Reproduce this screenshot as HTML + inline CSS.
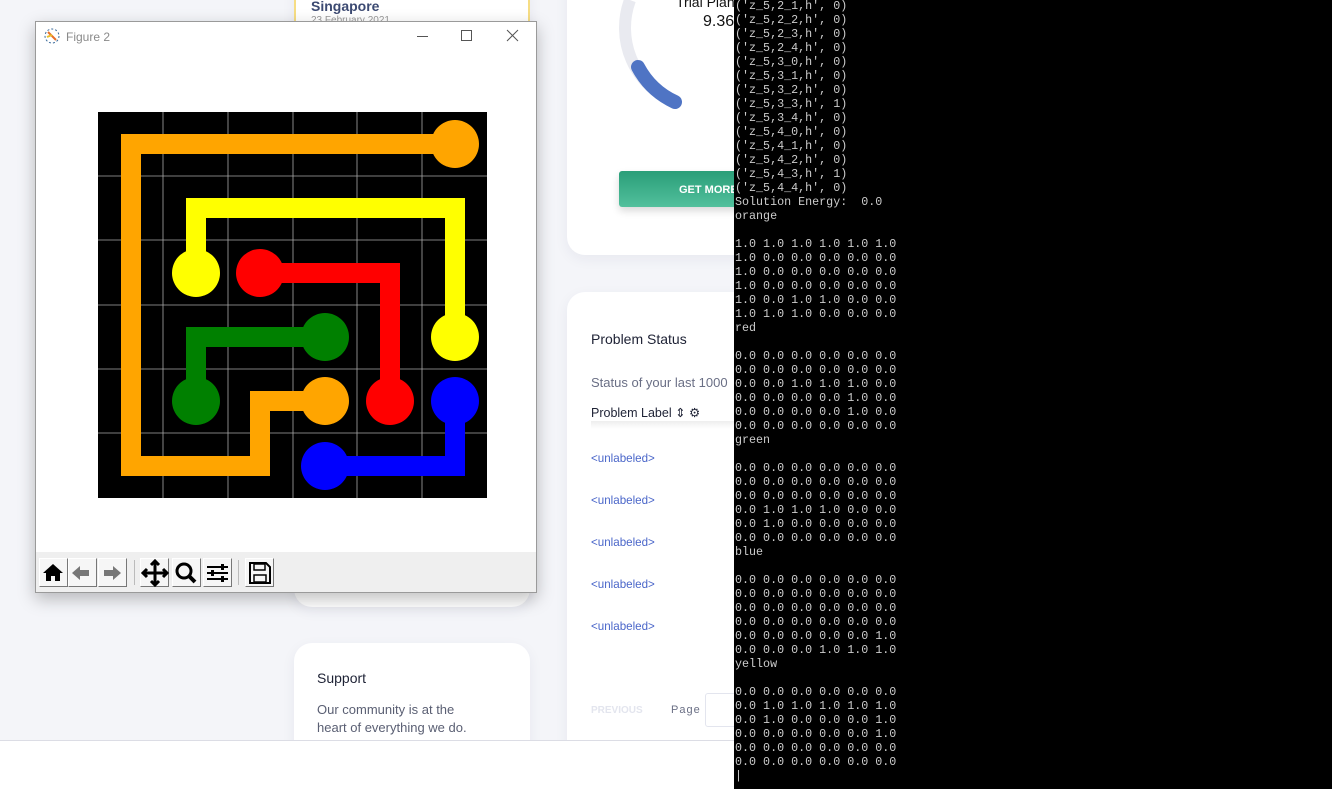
<!DOCTYPE html>
<html><head><meta charset="utf-8"><style>
*{margin:0;padding:0;box-sizing:border-box}
body{width:1332px;height:789px;overflow:hidden;background:#f4f5f9;position:relative;font-family:"Liberation Sans",sans-serif}
.card{position:absolute;background:#fff;border-radius:18px;box-shadow:0 4px 14px rgba(30,40,80,.06)}
.term{position:absolute;left:734px;top:0;width:598px;height:789px;background:#000;overflow:hidden}
.term pre{position:absolute;left:1px;top:-1px;font:11.7px/14px "Liberation Mono",monospace;color:#cccccc}
.lbl{position:absolute;left:591px;font-size:11.6px;color:#4a66c9}
.btn{position:absolute;top:558px;width:29px;height:29px;background:#f6f6f6;border:1px solid #fff;border-right-color:#777;border-bottom-color:#777}
</style></head><body>
<div class="card" style="left:294px;top:-20px;width:236px;height:627px"></div>
<div style="position:absolute;left:294px;top:-20px;width:236px;height:90px;border:2px solid #f6dd84;border-top:none;border-radius:0 0 18px 18px"></div>
<div style="position:absolute;left:311px;top:-2px;font-size:14px;font-weight:bold;color:#3c4a72">Singapore</div>
<div style="position:absolute;left:311px;top:15px;font-size:10px;color:#999">23 February 2021</div>
<div class="card" style="left:294px;top:643px;width:236px;height:140px"></div>
<div style="position:absolute;left:317px;top:670px;font-size:14px;color:#1e2235">Support</div>
<div style="position:absolute;left:317px;top:701px;font-size:13px;line-height:18px;color:#5a5f73">Our community is at the<br>heart of everything we do.</div>
<div class="card" style="left:567px;top:-30px;width:200px;height:285px"></div>
<svg style="position:absolute;left:600px;top:0" width="140" height="120"><path d="M30 0 A80 80 0 0 0 75 102" stroke="#e9eaf0" stroke-width="12" fill="none"/><path d="M38 67 A80 80 0 0 0 75 102" stroke="#4f74c4" stroke-width="14" fill="none" stroke-linecap="round"/></svg>
<div style="position:absolute;left:676px;top:-6px;font-size:14px;color:#111">Trial Plan</div>
<div style="position:absolute;left:703px;top:13px;font-size:16px;color:#111">9.36</div>
<div style="position:absolute;left:619px;top:171px;width:130px;height:36px;background:linear-gradient(#2a9e78,#52c09c);border-radius:3px;box-shadow:0 4px 8px rgba(0,0,0,.15);color:#fff;font-size:11px;font-weight:bold;padding:13px 0 0 60px">GET MORE</div>
<div class="card" style="left:567px;top:292px;width:200px;height:470px"></div>
<div style="position:absolute;left:591px;top:331px;font-size:14px;color:#1e2235">Problem Status</div>
<div style="position:absolute;left:591px;top:375px;font-size:13px;color:#6a6f85">Status of your last 1000</div>
<div style="position:absolute;left:591px;top:405px;font-size:12.5px;color:#1e2235">Problem Label ⇕ ⚙</div>
<div style="position:absolute;left:591px;top:421px;width:143px;height:8px;background:linear-gradient(#eee,#fff)"></div>
<div class="lbl" style="top:452px">&lt;unlabeled&gt;</div>
<div class="lbl" style="top:494px">&lt;unlabeled&gt;</div>
<div class="lbl" style="top:536px">&lt;unlabeled&gt;</div>
<div class="lbl" style="top:578px">&lt;unlabeled&gt;</div>
<div class="lbl" style="top:620px">&lt;unlabeled&gt;</div>
<div style="position:absolute;left:591px;top:705px;font-size:10px;font-weight:bold;color:#e3e5ee">PREVIOUS</div>
<div style="position:absolute;left:671px;top:704px;font-size:11px;letter-spacing:1px;color:#6a6f85">Page</div>
<div style="position:absolute;left:705px;top:693px;width:40px;height:34px;border:1px solid #e3e5ee;border-radius:3px;background:#fff"></div>
<div style="position:absolute;left:0;top:740px;width:734px;height:49px;background:#fff;border-top:1px solid #dcdde5"></div>
<div style="position:absolute;left:35px;top:21px;width:502px;height:572px;background:#fff;border:1px solid #9a9a9a;box-shadow:0 6px 16px rgba(0,0,0,.25)">
 <svg style="position:absolute;left:7px;top:5px" width="18" height="18"><circle cx="9" cy="9" r="7" fill="none" stroke="#3a6a9a" stroke-dasharray="2 2"/><path d="M5 5 L13 13" stroke="#e8702a" stroke-width="2"/><path d="M4 10 L9 8" stroke="#e8c02a" stroke-width="2"/></svg>
 <div style="position:absolute;left:30px;top:8px;font-size:12px;color:#8a8a8a">Figure 2</div>
 <div style="position:absolute;left:381px;top:14px;width:11px;height:1px;background:#555"></div>
 <div style="position:absolute;left:425px;top:8px;width:11px;height:11px;border:1px solid #555"></div>
 <svg style="position:absolute;left:470px;top:7px" width="13" height="13"><path d="M1 1L12 12M12 1L1 12" stroke="#555"/></svg>
 <svg style="position:absolute;left:62px;top:90px" width="390" height="386">
  <rect x="0" y="0" width="389" height="386" fill="#000"/>
  <g stroke="#a8a8a8" stroke-width="0.8">
   <path d="M65 0V386M130 0V386M195 0V386M259 0V386M324 0V386M0 64H389M0 128H389M0 193H389M0 257H389M0 321H389"/>
  </g>
  <g fill="none" stroke-width="20" stroke-linejoin="miter">
   <path d="M357 32H33V354H162V289H227" stroke="#ffa500"/>
   <path d="M98 161V96H357V225" stroke="#ffff00"/>
   <path d="M162 161H292V289" stroke="#ff0000"/>
   <path d="M227 225H98V289" stroke="#008000"/>
   <path d="M227 354H357V289" stroke="#0000ff"/>
  </g>
  <circle cx="357" cy="32" r="24" fill="#ffa500"/><circle cx="227" cy="289" r="24" fill="#ffa500"/>
  <circle cx="98" cy="161" r="24" fill="#ffff00"/><circle cx="357" cy="225" r="24" fill="#ffff00"/>
  <circle cx="162" cy="161" r="24" fill="#ff0000"/><circle cx="292" cy="289" r="24" fill="#ff0000"/>
  <circle cx="227" cy="225" r="24" fill="#008000"/><circle cx="98" cy="289" r="24" fill="#008000"/>
  <circle cx="227" cy="354" r="24" fill="#0000ff"/><circle cx="357" cy="289" r="24" fill="#0000ff"/>
 </svg>
 <div style="position:absolute;left:0;top:530px;width:500px;height:40px;background:#efefef"></div>
</div>
<div class="btn" style="left:39px"></div><div class="btn" style="left:68px"></div><div class="btn" style="left:98px"></div>
<div class="btn" style="left:140px"></div><div class="btn" style="left:172px"></div><div class="btn" style="left:203px"></div>
<div class="btn" style="left:245px"></div>
<div style="position:absolute;left:134px;top:560px;width:1px;height:25px;background:#bbb"></div>
<div style="position:absolute;left:238px;top:560px;width:1px;height:25px;background:#bbb"></div>
<svg style="position:absolute;left:39px;top:558px" width="240" height="30">
 <path d="M4 15L14 6L24 15H21V23H16V18H12V23H7V15Z" fill="#000"/>
 <path d="M33 15L41 8V12H50V18H41V22Z" fill="#777"/>
 <path d="M82 15L74 8V12H65V18H74V22Z" fill="#777"/>
 <path d="M116 4V26M105 15H127M112 7L116 3L120 7M112 23L116 27L120 23M108 11L104 15L108 19M124 11L128 15L124 19" stroke="#000" stroke-width="3" fill="none"/>
 <circle cx="145" cy="13" r="7" stroke="#000" stroke-width="3" fill="none"/><path d="M150 18L156 24" stroke="#000" stroke-width="4"/>
 <path d="M168 9H189M168 15H189M168 21H189" stroke="#000" stroke-width="2"/><rect x="182" y="6" width="3" height="6" fill="#000"/><rect x="172" y="12" width="3" height="6" fill="#000"/><rect x="182" y="18" width="3" height="6" fill="#000"/>
 <path d="M211 5H227L231 9V25H211Z" fill="none" stroke="#000" stroke-width="2"/><rect x="215" y="6" width="11" height="6" fill="none" stroke="#000" stroke-width="1.5"/><rect x="215" y="17" width="12" height="7" fill="none" stroke="#000" stroke-width="1.5"/>
</svg>
<div class="term"><pre>('z_5,2_1,h', 0)
('z_5,2_2,h', 0)
('z_5,2_3,h', 0)
('z_5,2_4,h', 0)
('z_5,3_0,h', 0)
('z_5,3_1,h', 0)
('z_5,3_2,h', 0)
('z_5,3_3,h', 1)
('z_5,3_4,h', 0)
('z_5,4_0,h', 0)
('z_5,4_1,h', 0)
('z_5,4_2,h', 0)
('z_5,4_3,h', 1)
('z_5,4_4,h', 0)
Solution Energy:  0.0
orange

1.0 1.0 1.0 1.0 1.0 1.0
1.0 0.0 0.0 0.0 0.0 0.0
1.0 0.0 0.0 0.0 0.0 0.0
1.0 0.0 0.0 0.0 0.0 0.0
1.0 0.0 1.0 1.0 0.0 0.0
1.0 1.0 1.0 0.0 0.0 0.0
red

0.0 0.0 0.0 0.0 0.0 0.0
0.0 0.0 0.0 0.0 0.0 0.0
0.0 0.0 1.0 1.0 1.0 0.0
0.0 0.0 0.0 0.0 1.0 0.0
0.0 0.0 0.0 0.0 1.0 0.0
0.0 0.0 0.0 0.0 0.0 0.0
green

0.0 0.0 0.0 0.0 0.0 0.0
0.0 0.0 0.0 0.0 0.0 0.0
0.0 0.0 0.0 0.0 0.0 0.0
0.0 1.0 1.0 1.0 0.0 0.0
0.0 1.0 0.0 0.0 0.0 0.0
0.0 0.0 0.0 0.0 0.0 0.0
blue

0.0 0.0 0.0 0.0 0.0 0.0
0.0 0.0 0.0 0.0 0.0 0.0
0.0 0.0 0.0 0.0 0.0 0.0
0.0 0.0 0.0 0.0 0.0 0.0
0.0 0.0 0.0 0.0 0.0 1.0
0.0 0.0 0.0 1.0 1.0 1.0
yellow

0.0 0.0 0.0 0.0 0.0 0.0
0.0 1.0 1.0 1.0 1.0 1.0
0.0 1.0 0.0 0.0 0.0 1.0
0.0 0.0 0.0 0.0 0.0 1.0
0.0 0.0 0.0 0.0 0.0 0.0
0.0 0.0 0.0 0.0 0.0 0.0
|</pre></div>
</body></html>
